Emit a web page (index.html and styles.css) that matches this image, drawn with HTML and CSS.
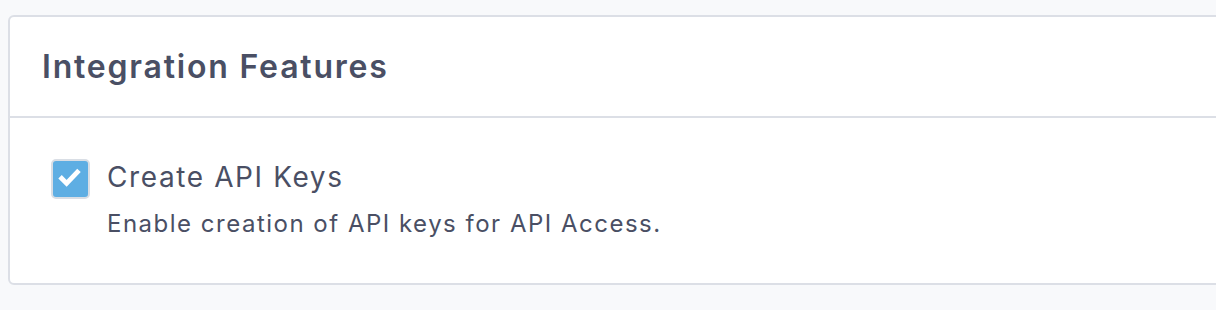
FILE: index.html
```html
<!DOCTYPE html>
<html>
<head>
<meta charset="utf-8">
<link rel="stylesheet" href="styles.css">
</head>
<body>
<section class="panel">
  <header class="panel-header">
    <h2 class="panel-title">Integration Features</h2>
  </header>
  <div class="panel-body">
    <label class="feature">
      <span class="checkbox">
        <svg viewBox="0 0 36 36" width="36" height="36"><path d="M9 17.5 L14 22.5 L25 11" fill="none" stroke="#fff" stroke-width="5" stroke-linecap="square" stroke-linejoin="miter"/></svg>
      </span>
      <span class="feature-text">
        <span class="feature-name">Create API Keys</span>
        <span class="feature-desc">Enable creation of API keys for API Access.</span>
      </span>
    </label>
  </div>
</section>
</body>
</html>
```
FILE: styles.css
```css
html, body {
  margin: 0;
  padding: 0;
  background: #f8f9fb;
}
body {
  font-family: "Inter", "Open Sans", sans-serif;
  color: #4a4f64;
  overflow: hidden;
}
.panel {
  margin: 15px -20px 0 8px;
  background: #fff;
  border: 2px solid #dcdfe6;
  border-radius: 6px;
}
.panel-header {
  height: 99px;
  border-bottom: 2px solid #dcdfe6;
  display: flex;
  align-items: center;
  padding-left: 32px;
}
.panel-title {
  margin: 0;
  font-size: 32px;
  line-height: 38px;
  font-weight: 600;
  letter-spacing: 1.8px;
  color: #4a4f64;
}
.panel-body {
  height: 165px;
  padding: 42px 0 0 41px;
  box-sizing: border-box;
}
.feature {
  display: flex;
  gap: 17px;
  align-items: flex-start;
}
.checkbox {
  width: 39px;
  height: 40px;
  box-sizing: border-box;
  border: 2px solid #d9dee5;
  border-radius: 5px;
  background: #5eaee3;
  display: flex;
  align-items: center;
  justify-content: center;
  margin-top: -1px;
}
.feature-text {
  display: flex;
  flex-direction: column;
}
.feature-name {
  font-size: 28px;
  line-height: 34px;
  letter-spacing: 1.6px;
}
.feature-desc {
  font-size: 24px;
  line-height: 28px;
  margin-top: 16px;
  letter-spacing: 1.5px;
}
```
